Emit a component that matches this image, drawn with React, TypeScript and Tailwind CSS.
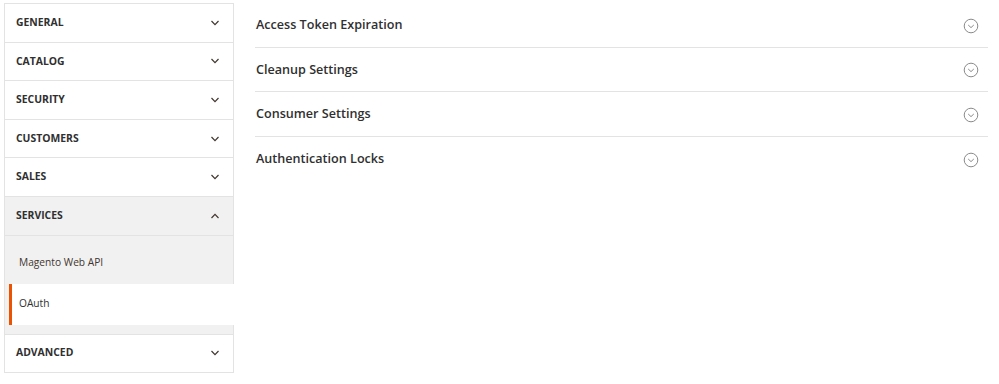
const groups = ["GENERAL", "CATALOG", "SECURITY", "CUSTOMERS", "SALES"];
const sections = [
  "Access Token Expiration",
  "Cleanup Settings",
  "Consumer Settings",
  "Authentication Locks",
];

function Chevron({ up = false }: { up?: boolean }) {
  return (
    <svg width="10" height="6" viewBox="0 0 10 6" className={up ? "rotate-180" : ""}>
      <path d="M1.5 1l3.5 3.6L8.5 1" fill="none" stroke="#41362f" strokeWidth="1.2" />
    </svg>
  );
}

function CircleChevron() {
  return (
    <svg width="16" height="16" viewBox="0 0 16 16">
      <circle cx="8" cy="8" r="6.8" fill="none" stroke="#8a8a8a" strokeWidth="1" />
      <path d="M5.2 7l2.8 2.6L10.8 7" fill="none" stroke="#8a8a8a" strokeWidth="1" />
    </svg>
  );
}

export default function App() {
  return (
    <div
      className="flex h-[384px] w-[999px] bg-white pl-[4px] pt-[3px] text-[#303030]"
      style={{ fontFamily: '"Open Sans", sans-serif' }}
    >
      <aside className="w-[230px] shrink-0 self-start border border-[#e3e3e3]">
        {groups.map((g) => (
          <div
            key={g}
            className="flex h-[38.6px] items-center justify-between border-b border-[#e3e3e3] pl-[11px] pr-[13px]"
          >
            <span className="text-[10.4px] font-bold">{g}</span>
            <Chevron />
          </div>
        ))}
        <div className="flex h-[38.6px] items-center justify-between border-b border-[#e3e3e3] bg-[#f1f1f1] pl-[11px] pr-[13px]">
          <span className="text-[10.4px] font-bold">SERVICES</span>
          <Chevron up />
        </div>
        <div className="bg-[#f1f1f1] pb-[9px] pl-[4px]">
          <div className="flex h-[48px] items-center pl-[10px] pt-[7px] text-[10.2px] text-[#41362f]">
            Magento Web API
          </div>
          <div className="-mr-px flex h-[41px] items-center border-l-[3px] border-[#eb5202] bg-white pl-[7px] text-[10.2px] text-[#303030]">
            OAuth
          </div>
        </div>
        <div className="flex h-[38px] items-center justify-between border-t border-[#e3e3e3] pl-[11px] pr-[13px]">
          <span className="text-[10.4px] font-bold">ADVANCED</span>
          <Chevron />
        </div>
      </aside>
      <main className="ml-[21px] mr-[11px] flex-1">
        {sections.map((s, i) => (
          <div
            key={s}
            className={`flex h-[44.5px] items-center justify-between pl-[1px] pr-[9px] pt-[2px] ${
              i < sections.length - 1 ? "border-b border-[#e3e3e3]" : ""
            }`}
          >
            <span className="text-[12.6px] font-semibold text-[#303030]">{s}</span>
            <CircleChevron />
          </div>
        ))}
      </main>
    </div>
  );
}
